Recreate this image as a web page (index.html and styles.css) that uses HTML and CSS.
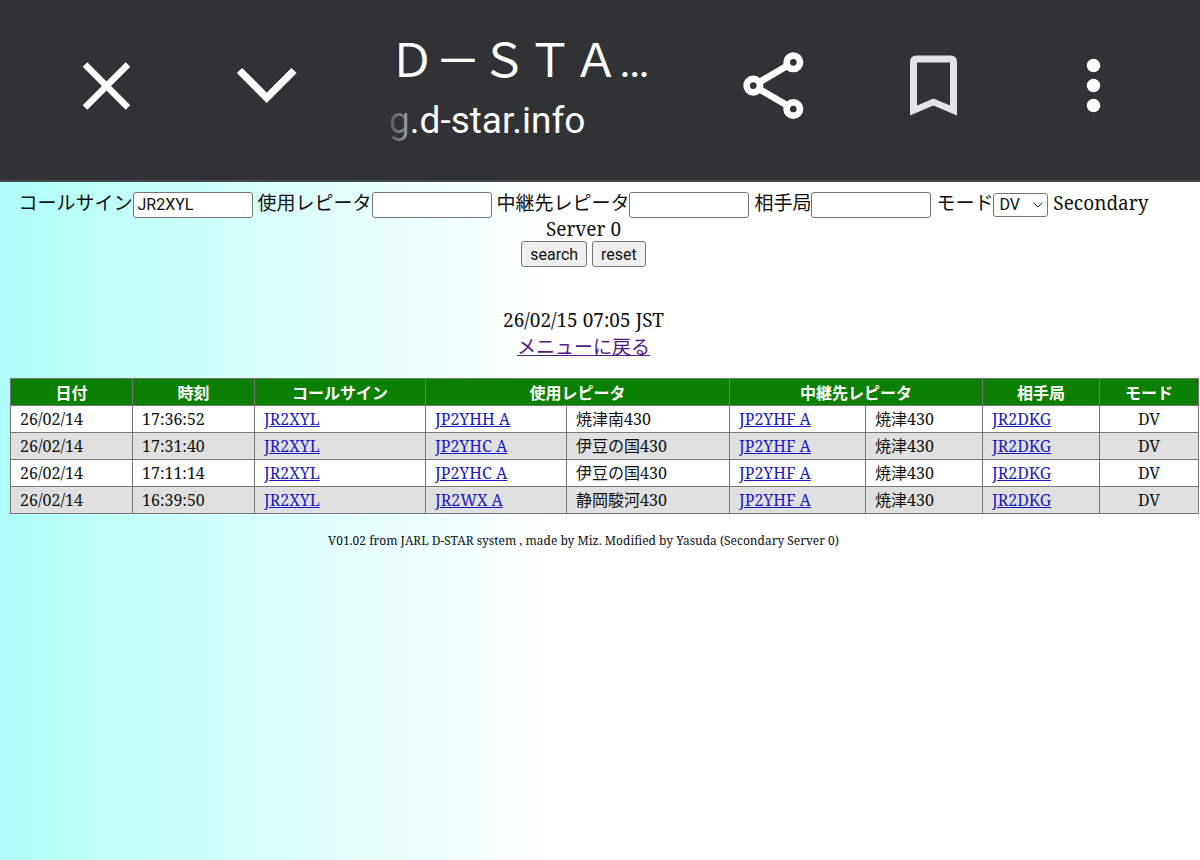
FILE: index.html
```html
<!DOCTYPE html>
<html lang="ja">
<head>
<meta charset="utf-8">
<meta name="viewport" content="width=device-width, initial-scale=1">
<title>D-STAR</title>
<link rel="stylesheet" href="styles.css">
</head>
<body>
<header class="toolbar">
  <button class="tool" type="button" aria-label="Close">
    <svg width="80" height="80" viewBox="0 0 80 80"><path d="M19 19.500 62 62.500M62 19.500 19 62.500" fill="none" stroke="#fff" stroke-width="6.500"/></svg>
  </button>
  <button class="tool" type="button" aria-label="Minimize">
    <svg width="80" height="80" viewBox="0 0 80 80"><path d="M13.500 25.500 40.700 52.800 68 25.500" fill="none" stroke="#fff" stroke-width="7.400"/></svg>
  </button>
  <div class="page-info">
    <div class="page-title">Ｄ－ＳＴＡ<span class="dots">…</span></div>
    <div class="page-url"><span class="fade">g</span>.d-star.info</div>
  </div>
  <button class="tool" type="button" aria-label="Share">
    <svg width="80" height="80" viewBox="0 0 80 80" fill="none" stroke="#fff" stroke-width="6.700"><circle cx="60.300" cy="17.300" r="6.700"/><circle cx="20.300" cy="40.600" r="6.700"/><circle cx="60.300" cy="64" r="6.700"/><path d="M26 37.300 54.500 20.600M26 43.900 54.500 60.600"/></svg>
  </button>
  <button class="tool" type="button" aria-label="Bookmark">
    <svg width="80" height="80" viewBox="0 0 80 80"><path fill="#e3e3e8" fill-rule="evenodd" d="M17 70.500V17Q17 10.500 23.500 10.500H57.500Q64 10.500 64 17V70.500L40.500 60.500ZM24 60.500 40.500 53.500 57 60.500V17.500H24Z"/></svg>
  </button>
  <button class="tool" type="button" aria-label="More">
    <svg width="80" height="80" viewBox="0 0 80 80" fill="#fff"><circle cx="40.500" cy="20.500" r="6.700"/><circle cx="40.500" cy="40.500" r="6.700"/><circle cx="40.500" cy="60.500" r="6.700"/></svg>
  </button>
</header>
<main class="content">
  <form class="search">
    <div class="fields">
      <label class="jp" for="call">コールサイン</label><input class="box" id="call" type="text" value="JR2XYL">
      <label class="jp" for="rpt">使用レピータ</label><input class="box" id="rpt" type="text">
      <label class="jp" for="relay">中継先レピータ</label><input class="box" id="relay" type="text">
      <label class="jp" for="peer">相手局</label><input class="box" id="peer" type="text">
      <label class="jp" for="mode">モード</label><select class="mode" id="mode"><option>DV</option></select>
      <span>Secondary</span> <span>Server 0</span>
    </div>
    <button class="action" type="submit">search</button>
    <button class="action" type="reset">reset</button>
  </form>
  <p class="stamp">26/02/15 07:05 JST<br><a class="menu" href="#">メニューに戻る</a></p>
  <table class="log">
    <colgroup><col class="c-date"><col class="c-time"><col class="c-call"><col class="c-rpt"><col class="c-place"><col class="c-relay"><col class="c-peer"><col class="c-peer"><col class="c-mode"></colgroup>
    <thead>
      <tr><th>日付</th><th>時刻</th><th>コールサイン</th><th colspan="2">使用レピータ</th><th colspan="2">中継先レピータ</th><th>相手局</th><th>モード</th></tr>
    </thead>
    <tbody>
      <tr><td>26/02/14</td><td>17:36:52</td><td><a href="#">JR2XYL</a></td><td><a href="#">JP2YHH A</a></td><td>焼津南430</td><td><a href="#">JP2YHF A</a></td><td>焼津430</td><td><a href="#">JR2DKG</a></td><td class="kind">DV</td></tr>
      <tr><td>26/02/14</td><td>17:31:40</td><td><a href="#">JR2XYL</a></td><td><a href="#">JP2YHC A</a></td><td>伊豆の国430</td><td><a href="#">JP2YHF A</a></td><td>焼津430</td><td><a href="#">JR2DKG</a></td><td class="kind">DV</td></tr>
      <tr><td>26/02/14</td><td>17:11:14</td><td><a href="#">JR2XYL</a></td><td><a href="#">JP2YHC A</a></td><td>伊豆の国430</td><td><a href="#">JP2YHF A</a></td><td>焼津430</td><td><a href="#">JR2DKG</a></td><td class="kind">DV</td></tr>
      <tr><td>26/02/14</td><td>16:39:50</td><td><a href="#">JR2XYL</a></td><td><a href="#">JR2WX A</a></td><td>静岡駿河430</td><td><a href="#">JP2YHF A</a></td><td>焼津430</td><td><a href="#">JR2DKG</a></td><td class="kind">DV</td></tr>
    </tbody>
  </table>
  <footer class="credit">V01.02 from JARL D-STAR system , made by Miz. Modified by Yasuda (Secondary Server 0)</footer>
</main>
</body>
</html>
```
FILE: styles.css
```css
* { box-sizing: border-box; }

body {
  margin: 0;
  min-height: 100vh;
  color: #111;
  font: 19px/24px "Noto Serif", "Noto Sans CJK JP", serif;
  background: linear-gradient(to right, #aefcf6 0, #b5fff7 50px, #cafff9 180px, #dcfffb 300px, #ecffff 420px, #fff 550px);
}

.toolbar {
  display: flex;
  align-items: center;
  height: 182px;
  padding: 0 27px 10px 26px;
  background: #313236;
  border-bottom: 2px solid #47484c;
}
.tool {
  display: flex;
  flex: 0 0 160px;
  justify-content: center;
  padding: 0;
  border: 0;
  background: none;
}
.page-info {
  flex: 1;
  padding: 5px 0 0 43px;
  overflow: hidden;
  color: #fff;
  white-space: nowrap;
}
.page-title { font: 400 46px/62px "Noto Sans CJK JP", sans-serif; }
.dots { font-family: Roboto, sans-serif; font-weight: 400; }
.page-url { font: 37px/58px Roboto, sans-serif; }
.fade {
  color: transparent;
  background: linear-gradient(to right, #55565a, #a0a0a3);
  background-clip: text;
}

.content { padding: 8px 1px 0 10px; }
.search, .stamp, .credit {
  margin-right: 42px;
  text-align: center;
}
.fields { line-height: 23px; }
.jp, .menu { font-family: "Noto Sans CJK JP", sans-serif; }
.box, .mode, .action {
  height: 26px;
  border: 1px solid #767676;
  border-radius: 3px;
  color: #111;
  font: 16px Roboto, sans-serif;
}
.box {
  width: 120px;
  padding: 1px 4px;
  background: #fff;
}
.mode {
  width: 55px;
  height: 24px;
  padding: 0 5px;
  appearance: none;
  background: #fff url("data:image/svg+xml,%3Csvg xmlns='http://www.w3.org/2000/svg' width='10' height='6' viewBox='0 0 10 6'%3E%3Cpath d='M.5.5 5 5 9.500.5' fill='none' stroke='%23333'/%3E%3C/svg%3E") no-repeat right 4px center;
}
.action {
  padding: 1px 8px;
  background: #efefef;
}
.stamp { margin-top: 40px; margin-bottom: 18px; line-height: 26px; }
.menu { color: #551a8b; }

.log {
  width: 100%;
  table-layout: fixed;
  border-collapse: collapse;
  background: #fff;
  font-size: 16px;
  line-height: 20px;
}
.log th, .log td {
  height: 27px;
  padding: 3px 9px;
  border: 1px solid #777;
  text-align: left;
  white-space: nowrap;
}
.log th {
  background: #0b8000;
  color: #fff;
  text-align: center;
  font: bold 16px/20px "Noto Sans CJK JP", sans-serif;
}
.log tbody tr:nth-child(even) { background: #e0e0e0; }
.log a { color: #1a1ac4; }
.log .kind { text-align: center; }
.c-date, .c-time { width: 122px; }
.c-call { width: 171px; }
.c-rpt { width: 141px; }
.c-place { width: 163px; }
.c-relay { width: 136px; }
.c-peer { width: 117px; }

.credit { margin-top: 17px; font-size: 12px; line-height: 20px; }
```
